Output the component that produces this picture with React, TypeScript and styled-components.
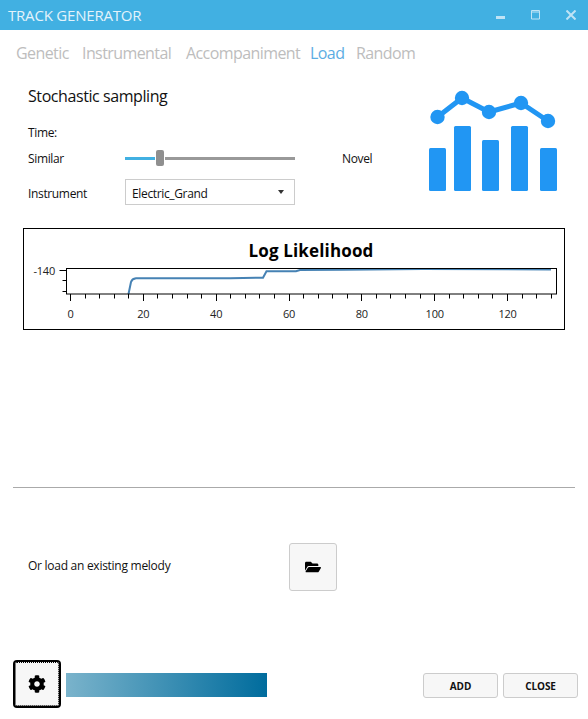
import styled, { createGlobalStyle } from 'styled-components'
import { FaCog, FaFolderOpen } from 'react-icons/fa'

const GlobalStyle = createGlobalStyle`
  html, body {
    margin: 0;
    padding: 0;
    background: #fff;
  }

  body {
    font-family: 'Open Sans', 'Noto Sans', sans-serif;
    color: #111;
    overflow: hidden;
  }

  * {
    box-sizing: border-box;
  }
`

const Window = styled.div`
  display: flex;
  flex-direction: column;
  width: 588px;
  height: 719px;
  background: #fff;
`

const TitleBar = styled.header`
  display: flex;
  align-items: center;
  justify-content: space-between;
  height: 30px;
  padding: 0 12px 0 8px;
  background: #41b0e2;
`

const Title = styled.h1`
  margin: 0;
  font-size: 15px;
  font-weight: 400;
  letter-spacing: -0.2px;
  color: #e3f3fb;
`

const WindowButtons = styled.div`
  display: flex;
  gap: 25px;
`

const WindowIcon = styled.svg`
  display: block;
  width: 10px;
  height: 10px;
  fill: none;
  stroke: #bfe3f5;
`

const Tabs = styled.nav`
  display: grid;
  grid-template-columns: 66px 104px 124px 46px auto;
  align-items: center;
  height: 38px;
  padding: 8px 0 0 16px;
`

const Tab = styled.a<{ $active?: boolean }>`
  font-size: 16px;
  letter-spacing: -0.58px;
  white-space: nowrap;
  color: ${p => (p.$active ? '#5cade3' : '#bdbdbd')};
`

const TopPanel = styled.section`
  display: flex;
  justify-content: space-between;
  height: 160px;
  padding: 0 31px 0 28px;
`

const Settings = styled.div`
  display: flex;
  flex-direction: column;
`

const Heading = styled.h2`
  margin: 17px 0 0;
  font-size: 16px;
  line-height: 22px;
  font-weight: 400;
  letter-spacing: -0.42px;
  color: #111;
`

const TimeLabel = styled.div`
  margin-top: 18px;
  font-size: 12px;
  line-height: 16px;
  letter-spacing: -0.35px;
`

const FormGrid = styled.div`
  display: grid;
  grid-template-columns: 97px 170px auto;
  grid-auto-rows: 26px;
  row-gap: 9px;
  align-items: center;
  margin-top: 3px;
`

const FieldLabel = styled.span`
  padding-top: 2px;
  font-size: 12px;
  letter-spacing: -0.35px;
  white-space: nowrap;
`

const SideLabel = styled(FieldLabel)`
  margin-left: 47px;
`

const Slider = styled.div`
  display: flex;
  align-items: center;
  gap: 1px;
  height: 16px;
  margin-top: 2px;
`

const SliderFill = styled.div`
  height: 3px;
  background: #41b0e2;
`

const SliderRest = styled.div`
  flex: 1;
  height: 3px;
  margin-top: 1px;
  background: #999;
`

const SliderThumb = styled.div`
  width: 8px;
  height: 16px;
  border-radius: 2px;
  background: #8f8f8f;
`

const Select = styled.div`
  display: flex;
  align-items: center;
  justify-content: space-between;
  height: 26px;
  padding: 2px 10px 0 6px;
  border: 1px solid #ccc;
  font-size: 12px;
  letter-spacing: -0.35px;
`

const SelectArrow = styled.span`
  width: 0;
  height: 0;
  margin-top: -2px;
  border-left: 3.5px solid transparent;
  border-right: 3.5px solid transparent;
  border-top: 4px solid #333;
`

const Logo = styled.svg`
  display: block;
  width: 128px;
  height: 102px;
  margin-top: 22px;
  fill: #2196f3;
`

const ChartBox = styled.section`
  width: 542px;
  height: 102px;
  margin-left: 23px;
`

const Chart = styled.svg`
  display: block;
  width: 100%;
  height: 100%;
  font-family: 'Open Sans', 'Noto Sans', sans-serif;
`

const Divider = styled.hr`
  width: 562px;
  height: 1px;
  margin: 157px 0 0 13px;
  border: 0;
  background: #aaa;
`

const LoadRow = styled.section`
  display: flex;
  align-items: center;
  margin-top: 55px;
  padding-left: 28px;
`

const LoadText = styled.span`
  width: 261px;
  margin-top: -4px;
  font-size: 12px;
  letter-spacing: -0.27px;
`

const IconButton = styled.button`
  display: flex;
  align-items: center;
  justify-content: center;
  width: 48px;
  height: 48px;
  padding: 0;
  border: 1px solid #ccc;
  border-radius: 3px;
  background: #f7f7f7;
  color: #000;
  font-size: 16px;
`

const SettingsButton = styled(IconButton)`
  border: 2px solid #000;
  border-radius: 4px;
  outline: 1px dotted #000;
  outline-offset: -3px;
  font-size: 18px;
`

const Footer = styled.footer`
  display: flex;
  align-items: flex-start;
  margin-top: 69px;
  padding: 0 10px 0 13px;
`

const ProgressBar = styled.div`
  width: 201px;
  height: 24px;
  margin: 13px 0 0 5px;
  background: linear-gradient(90deg, #7ab3cb, #006c9d);
`

const Actions = styled.div`
  display: flex;
  gap: 5px;
  margin: 13px 0 0 auto;
`

const ActionButton = styled.button`
  width: 75px;
  height: 25px;
  padding: 0;
  border: 1px solid #ccc;
  border-radius: 3px;
  background: #f7f7f7;
  color: #111;
  font-family: inherit;
  font-size: 10px;
  font-weight: 700;
  letter-spacing: -0.1px;
`

const tabs = ['Genetic', 'Instrumental', 'Accompaniment', 'Load', 'Random']

const bars = [
  { x: 0, y: 58, h: 43 },
  { x: 25, y: 36, h: 65 },
  { x: 53, y: 50, h: 51 },
  { x: 82, y: 36, h: 65 },
  { x: 111, y: 58, h: 43 },
]

const points = [
  [8.5, 27],
  [33, 8],
  [60, 22],
  [92, 13],
  [119, 31],
]

// plot area of the chart, in chart coordinates
const plotLeft = 43.5
const plotRight = 533.5
const plotTop = 40.5
const plotBottom = 66
const unit = 3.642
const xAt = (v: number) => 47 + v * unit

const majorTicks = [0, 20, 40, 60, 80, 100, 120]
const minorTicks = Array.from({ length: 34 }, (_, i) => i * 4).filter(v => v % 20 !== 0)

const curve =
  'M105.500 66 L108 54 Q109 50.700 113 50.300 L207 50.300 L240 49.700 L243.500 43.300 L265 43.300 L273 43.300 L277 42 L320 41.700 L400 41 L528 41.500'

const App = () => {
  return (
    <Window>
      <GlobalStyle />
      <TitleBar>
        <Title>TRACK GENERATOR</Title>
        <WindowButtons>
          <WindowIcon viewBox='0 0 10 10'>
            <path d='M0 7.500H9' strokeWidth='3' />
          </WindowIcon>
          <WindowIcon viewBox='0 0 10 10'>
            <path d='M.5 .500H8.500V9H.5Z M0 2H9' strokeWidth='1' />
          </WindowIcon>
          <WindowIcon viewBox='0 0 10 10'>
            <path d='M.5 .500L9.500 9.500M9.500 .500L.5 9.500' strokeWidth='2' />
          </WindowIcon>
        </WindowButtons>
      </TitleBar>

      <Tabs>
        {tabs.map(tab => (
          <Tab key={tab} $active={tab === 'Load'}>
            {tab}
          </Tab>
        ))}
      </Tabs>

      <TopPanel>
        <Settings>
          <Heading>Stochastic sampling</Heading>
          <TimeLabel>Time:</TimeLabel>
          <FormGrid>
            <FieldLabel>Similar</FieldLabel>
            <Slider>
              <SliderFill style={{ width: 30 }} />
              <SliderThumb />
              <SliderRest />
            </Slider>
            <SideLabel>Novel</SideLabel>
            <FieldLabel>Instrument</FieldLabel>
            <Select>
              Electric_Grand
              <SelectArrow />
            </Select>
          </FormGrid>
        </Settings>
        <Logo viewBox='0 0 128 102'>
          {bars.map(bar => (
            <rect key={bar.x} x={bar.x} y={bar.y} width='17' height={bar.h} rx='1.5' />
          ))}
          <polyline
            points={points.map(p => p.join(',')).join(' ')}
            fill='none'
            stroke='#2196f3'
            strokeWidth='5'
          />
          {points.map(([cx, cy]) => (
            <circle key={cx} cx={cx} cy={cy} r='7.2' />
          ))}
        </Logo>
      </TopPanel>

      <ChartBox>
        <Chart viewBox='0 0 542 102'>
          <rect x='.5' y='.5' width='541' height='101' fill='#fff' stroke='#000' />
          <text x='288' y='29' textAnchor='middle' fontSize='17' fontWeight='700' letterSpacing='.15' fill='#000'>
            Log Likelihood
          </text>
          <path d={curve} fill='none' stroke='#4682b4' strokeWidth='2' />
          <rect
            x={plotLeft}
            y={plotTop}
            width={plotRight - plotLeft}
            height={plotBottom - plotTop}
            fill='none'
            stroke='#000'
          />
          <path d={`M${plotLeft - 7} 42.500H${plotLeft}`} stroke='#000' />
          <path d={`M${plotLeft - 4} 52.500H${plotLeft}M${plotLeft - 4} 63.500H${plotLeft}`} stroke='#000' />
          <text x='32' y='46.500' textAnchor='end' fontSize='11' letterSpacing='-.2' fill='#222'>
            -140
          </text>
          {minorTicks.map(v => (
            <path key={v} d={`M${Math.round(xAt(v)) + 0.5} ${plotBottom}v4.500`} stroke='#000' />
          ))}
          {majorTicks.map(v => (
            <g key={v}>
              <path d={`M${Math.round(xAt(v)) + 0.5} ${plotBottom}v7`} stroke='#000' />
              <text x={xAt(v) + 0.5} y='89.500' textAnchor='middle' fontSize='11' letterSpacing='-.2' fill='#222'>
                {v}
              </text>
            </g>
          ))}
        </Chart>
      </ChartBox>

      <Divider />

      <LoadRow>
        <LoadText>Or load an existing melody</LoadText>
        <IconButton aria-label='Open'>
          <FaFolderOpen />
        </IconButton>
      </LoadRow>

      <Footer>
        <SettingsButton aria-label='Settings'>
          <FaCog />
        </SettingsButton>
        <ProgressBar />
        <Actions>
          <ActionButton>ADD</ActionButton>
          <ActionButton>CLOSE</ActionButton>
        </Actions>
      </Footer>
    </Window>
  )
}

export default App
